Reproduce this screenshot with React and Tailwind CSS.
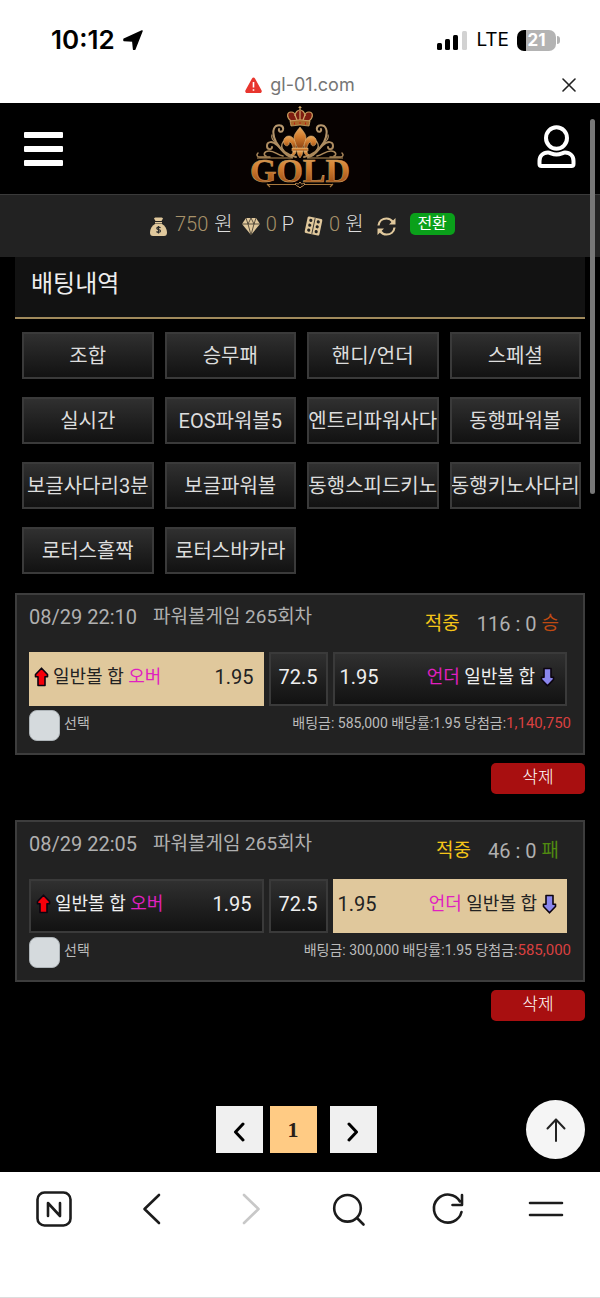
import React from "react";

const CATEGORIES = [
    "조합", "승무패", "핸디/언더", "스페셜",
    "실시간", "EOS파워볼5", "엔트리파워사다", "동행파워볼",
    "보글사다리3분", "보글파워볼", "동행스피드키노", "동행키노사다리",
    "로터스홀짝", "로터스바카라",
];

const BETS = [
    {
        id: 1, date: "08/29 22:10", game: "파워볼게임 265회차", score: "116 : 0",
        result: "승", picked: "over", stake: "585,000", payout: "1,140,750",
    },
    {
        id: 2, date: "08/29 22:05", game: "파워볼게임 265회차", score: "46 : 0",
        result: "패", picked: "under", stake: "300,000", payout: "585,000",
    },
];

const GRADIENT = "bg-linear-to-b from-[#303030] to-[#121212]";

const StatusBar = () => (
    <div className="flex h-[66px] items-center justify-between pt-[14px] pr-10 pl-[51px] font-['Inter',sans-serif] text-black">
        <div className="flex items-center gap-2">
            <span className="text-[26px] leading-8 font-semibold">10:12</span>
            <svg className="h-5 w-5" viewBox="0 0 20 20" fill="#000" stroke="#000" strokeWidth="1.500" strokeLinejoin="round">
                <path d="M19 1 1 9.300v1.200l8.800.600.800 8.200h1.200z" />
            </svg>
        </div>
        <div className="flex items-center gap-2">
            <svg className="h-[19px] w-[31px]" viewBox="0 0 31 19">
                <rect x="0" y="12" width="5" height="7" rx="1.500" />
                <rect x="8" y="8" width="5" height="11" rx="1.500" />
                <rect x="16" y="4" width="5" height="15" rx="1.500" />
                <rect x="25" y="0" width="5" height="19" rx="1.500" fill="#d2d2d2" />
            </svg>
            <span className="text-[19px] leading-6">LTE</span>
            <div className="flex items-center gap-px">
                <span className="flex h-[21px] w-[39px] items-center justify-center rounded-[7px] bg-linear-to-r from-black from-22% to-[#b3b3b3] to-22% text-[17px] leading-5 font-bold text-white">
                    21
                </span>
                <span className="h-2 w-[3px] rounded-r-full bg-[#b3b3b3]" />
            </div>
        </div>
    </div>
);

const AddressBar = () => (
    <div className="flex h-[37px] items-center pr-6 pl-[38px] font-['Inter',sans-serif]">
        <div className="flex flex-1 items-center justify-center gap-2">
            <svg className="h-4 w-[17px]" viewBox="0 0 17 16">
                <path d="M7 1.400 .5 13.200C-.2 14.600.6 16 2 16h13c1.400 0 2.200-1.400 1.500-2.800L10 1.400c-.7-1.300-2.300-1.300-3 0z" fill="#e8352e" />
                <path d="M8.500 5v5.500M8.500 12.300v1.500" stroke="#fff" strokeWidth="1.600" />
            </svg>
            <span className="text-[18px] leading-6 text-[#757575]">gl-01.com</span>
        </div>
        <button type="button" aria-label="닫기">
            <svg className="h-[14px] w-[14px]" viewBox="0 0 14 14" stroke="#222" strokeWidth="1.600" strokeLinecap="round">
                <path d="M1 1l12 12M13 1L1 13" />
            </svg>
        </button>
    </div>
);

const Scroll = () => (
    <g fill="none" stroke="url(#vine)" strokeLinecap="round">
        <path d="M66 57C56 55 50 49 46 42c-3-6-4-13 0-16 4-2 8 0 7 4-1 3-5 2-4-1" strokeWidth="2" />
        <path d="M62 57c-8-1-10-8-15-12-4-4-10-4-10 1 0 4 5 4 5 1" strokeWidth="2" />
        <path d="M53 56c-6-1-8-5-14-5-5 0-6 4-3 5" strokeWidth="1.600" />
        <path d="M40 57H30c-3 0-4-2-2-4" strokeWidth="1.500" />
        <path d="M54 51c-3-3-3-6-1-9 2-2 4 0 3 2M46 42c-3-1-5-4-4-7" strokeWidth="1.300" />
    </g>
);

const Logo = () => (
    <svg className="h-[90px] w-[140px]" viewBox="0 4 140 90" role="img" aria-label="GOLD">
        <defs>
            <linearGradient id="gold" x1="0" y1="0" x2="0" y2="1">
                <stop offset="0" stopColor="#e9a95c" />
                <stop offset=".45" stopColor="#d07a2c" />
                <stop offset="1" stopColor="#8a3f10" />
            </linearGradient>
            <linearGradient id="vine" gradientUnits="userSpaceOnUse" x1="0" y1="24" x2="0" y2="58">
                <stop offset="0" stopColor="#b99a70" />
                <stop offset="1" stopColor="#a98658" />
            </linearGradient>
        </defs>
        <path d="M0 4h140v90H0z" fill="#070201" />
        {/* crown */}
        <path d="M61 21c-5-4-4-9 0-9 3 0 4 2 4 4 0-4 3-6 5-6s5 2 5 6c0-2 1-4 4-4 4 0 5 5 0 9z" fill="#7d1d10" stroke="#c79c5e" strokeWidth="1.200" />
        <path d="M70 6v4M68.500 7.500h3M70 11v9M65 15l2 5M75 15l-2 5" stroke="#d0a869" strokeWidth="1.200" />
        <path d="M60 21q10-2.500 20 0l-1 5q-9-2-18 0z" fill="#a8672a" stroke="#d0a869" strokeWidth=".8" />
        <path d="M64 23.500h1M69.500 23h1M75 23.500h1" stroke="#b91d12" strokeWidth="2" />
        <Scroll />
        <g transform="translate(140 0) scale(-1 1)">
            <Scroll />
        </g>
        {/* fleur-de-lis */}
        <g fill="url(#gold)" stroke="#dfb678" strokeWidth=".6">
            <path d="M70 27c-3 4-6 7-6 11 0 5 3 7 3.500 11h5C73 45 76 43 76 38c0-4-3-7-6-11z" />
            <path d="M66 49c0-8-3-13-7-13-5 0-7 6-4 9 2 2 5 0 4-3 3 0 3 4 5 7z" />
            <path d="M74 49c0-8 3-13 7-13 5 0 7 6 4 9-2 2-5 0-4-3-3 0-3 4-5 7z" />
            <path d="M62 48h16v3H62z" />
            <path d="M67 51h6l-1 4-2 3-2-3zM66 51c0 3-2 5-5 4 1-1 2-2 2-4zM74 51c0 3 2 5 5 4-1-1-2-2-2-4z" />
        </g>
        <path d="M27 58h36M77 58h36" stroke="#b98f58" strokeWidth="1.200" />
        <text
            x="70" y="82" textAnchor="middle" fontFamily="'Liberation Serif', serif" fontWeight="700" fontSize="34"
            fill="url(#gold)" stroke="#c79a5f" strokeWidth=".6"
        >
            GOLD
        </text>
        <path d="M37 84.500h28M75 84.500h28M37 84l3 3M103 84l-3 3" stroke="#a8793f" strokeWidth="1.200" fill="none" />
        <path d="M65 84c2-2 3 2 5-2 2 4 3 0 5 2-2 3-4 2-5 4-1-2-3-1-5-4z" fill="none" stroke="#c9965a" strokeWidth="1" />
    </svg>
);

const Header = () => (
    <header className="flex h-[91px] items-center justify-between bg-black pr-6 pl-6">
        <button type="button" aria-label="메뉴" className="flex w-[39px] flex-col gap-2">
            <span className="h-[6px] rounded-[1px] bg-white" />
            <span className="h-[6px] rounded-[1px] bg-white" />
            <span className="h-[6px] rounded-[1px] bg-white" />
        </button>
        <Logo />
        <button type="button" aria-label="내 정보" className="pb-1">
            <svg className="h-[44px] w-[39px]" viewBox="0 0 39 44" fill="none" stroke="#fff" strokeWidth="4" strokeLinejoin="round">
                <ellipse cx="19.500" cy="13" rx="10.500" ry="10.800" />
                <path d="M11 27.500c-5 0-8.500 3.500-8.500 8.500v3c0 1.500.5 2 2 2h30c1.500 0 2-.5 2-2v-3c0-5-3.500-8.500-8.500-8.500-2.500 0-4 2-8.500 2s-6-2-8.500-2z" />
            </svg>
        </button>
    </header>
);

const Wallet = () => (
    <div className="flex h-[63px] items-center border-t border-[#3a3a3a] bg-[#222] pb-1 pl-[150px] text-[20px] leading-7 font-light text-[#ddd]">
        <svg className="mt-1 h-[19px] w-[17px]" viewBox="0 0 17 19" fill="#e0c89c">
            <path d="M4 1.500C5-.3 6.500.6 8.500.6s3.500-.9 4.500.9L11.500 4h-6zM5 5h7v1.500H5z" />
            <path d="M5 7h7c3 1.500 5 5 5 8.500 0 2.500-1 3.500-3 3.500H3c-2 0-3-1-3-3.500C0 12 2 8.500 5 7z" />
            <path d="M10.500 10.800c-1-1-3.700-.8-3.700.7 0 1.600 3.700.8 3.700 2.500 0 1.500-2.900 1.700-4 .5M8.500 9v7.500" fill="none" stroke="#2a2a2a" strokeWidth="1.200" />
        </svg>
        <span className="ml-2 text-[#a8926a]">750</span>
        <span className="ml-[6px]">원</span>
        <svg className="mt-1 ml-[9px] h-[17px] w-[18px]" viewBox="0 0 18 17">
            <path d="M4 0h10l4 6-9 11L0 6z" fill="#e0c89c" />
            <path d="M0 6h18M4 0l2 6 3 11 3-11 2-6M6 6l3-6 3 6" fill="none" stroke="#3a342a" strokeWidth=".8" />
        </svg>
        <span className="ml-[6px] text-[#a8926a]">0</span>
        <span className="ml-[5px]">P</span>
        <svg className="mt-1 ml-[10px] h-5 w-[19px]" viewBox="0 0 19 20">
            <g transform="rotate(12 9.500 10)">
                <rect x="2" y="1.500" width="15" height="17" rx="1.500" fill="#e0c89c" />
                <path d="M9.500 2v16" stroke="#222" strokeWidth=".8" />
                <g fill="#222">
                    <circle cx="5.700" cy="5" r="1.600" />
                    <circle cx="5.700" cy="10" r="1.600" />
                    <circle cx="5.700" cy="15" r="1.600" />
                    <circle cx="13.300" cy="5" r="1.600" />
                    <circle cx="13.300" cy="10" r="1.600" />
                    <circle cx="13.300" cy="15" r="1.600" />
                </g>
            </g>
        </svg>
        <span className="ml-[6px] text-[#a8926a]">0</span>
        <span className="ml-[5px]">원</span>
        <button type="button" aria-label="새로고침" className="mt-1 ml-[13px]">
            <svg className="h-[19px] w-[19px]" viewBox="0 0 19 19" fill="none" stroke="#e0c89c" strokeWidth="2.200">
                <path d="M1.500 8.500C2 4 5.500 1.500 9.500 1.500c3 0 5 1.500 6.500 3.500M17.500 10.500c-.5 4.500-4 7-8 7-3 0-5-1.500-6.500-3.500" />
                <path d="M18.500 1v6.500H12zM.5 18v-6.500H7z" fill="#e0c89c" stroke="none" />
            </svg>
        </button>
        <button type="button" className="ml-[14px] h-[22px] w-[45px] rounded-[5px] bg-[#0aa01a] text-[16px] leading-5 font-normal text-white">
            전환
        </button>
    </div>
);

const Arrow = ({ down }) => (
    <svg className={`h-5 w-[15px] shrink-0 ${down ? "rotate-180" : ""}`} viewBox="0 0 15 20">
        <path
            d="M7.500 1.200 13.500 7.500v2.300h-2.500V18.500H4V9.800H1.500V7.500z"
            fill={down ? "#8a86ee" : "#f5000a"} stroke="#0c0410" strokeWidth="1.600" strokeLinejoin="round"
        />
    </svg>
);

const oddsClass = (picked) =>
    picked ? "bg-[#e0c89c] text-[#222]" : `border-2 border-[#3a3a3a] text-[#eee] ${GRADIENT}`;

const BetCard = ({ bet }) => (
    <article className="mb-[26px]">
        <div className="border-2 border-[#3d3d3d] bg-[#222] px-3 pb-3">
            <div className="flex h-[57px] items-start justify-between pr-3 text-[20px] leading-7 text-[#b0b0b0]">
                <h2 className="flex pt-2">
                    {bet.date}
                    <span className="ml-4 text-[19px]">{bet.game}</span>
                </h2>
                <p className="flex pt-[15px]">
                    <span className="mr-[17px] text-[19px] text-[#f5c518]">적중</span>
                    {bet.score}
                    <span className={`ml-[5px] text-[19px] ${bet.result === "승" ? "text-[#c04a12]" : "text-[#4f8a10]"}`}>{bet.result}</span>
                </p>
            </div>
            <div className="grid h-[54px] grid-cols-[1fr_59px_1fr] gap-[5px] pr-1 text-[20px] leading-7">
                <button type="button" className={`flex items-center pr-[10px] pb-1 pl-[5px] ${oddsClass(bet.picked === "over")}`}>
                    <Arrow />
                    <span className="ml-1 text-[18px]">
                        일반볼 합 <span className="text-[#e020c0]">오버</span>
                    </span>
                    <span className="ml-auto">1.95</span>
                </button>
                <span className={`flex items-center justify-center border-2 border-[#3a3a3a] pb-1 text-[#eee] ${GRADIENT}`}>72.5</span>
                <button type="button" className={`flex items-center pr-[10px] pb-1 pl-[5px] ${oddsClass(bet.picked === "under")}`}>
                    <span>1.95</span>
                    <span className="mr-[5px] ml-auto text-[18px]">
                        <span className="text-[#e020c0]">언더</span> 일반볼 합
                    </span>
                    <Arrow down />
                </button>
            </div>
            <div className="mt-1 flex items-start justify-between text-[14px] leading-[26px] text-[#bbb]">
                <label className="flex gap-1">
                    <input type="checkbox" className="h-[31px] w-[31px] appearance-none rounded-[8px] border border-[#aeb4b8] bg-[#d5dadd] checked:bg-[#e0c89c]" />
                    선택
                </label>
                <p>
                    배팅금: {bet.stake} 배당률:1.95 당첨금:<span className="text-[15px] text-[#d94040]">{bet.payout}</span>
                </p>
            </div>
        </div>
        <button type="button" className="mt-2 ml-auto block h-[31px] w-[94px] rounded-[5px] bg-[#a80f10] pb-1 text-[17px] leading-6 font-light text-white">
            삭제
        </button>
    </article>
);

const Pagination = () => (
    <nav className="mt-[79px] flex items-center justify-between pb-[13px]">
        <span className="w-[51px]" />
        <div className="flex">
            <button type="button" aria-label="이전" className="flex h-[47px] w-[47px] items-center justify-center bg-[#f0f0f0] pt-1">
                <svg className="h-5 w-3" viewBox="0 0 12 20" fill="none" stroke="#000" strokeWidth="3" strokeLinecap="round" strokeLinejoin="round">
                    <path d="M10 2 2.500 10l7.500 8" />
                </svg>
            </button>
            <button type="button" className="ml-[7px] h-[47px] w-[47px] bg-[#ffcb84] font-['Liberation_Serif',serif] text-[22px] font-bold text-[#2a2018]">1</button>
            <button type="button" aria-label="다음" className="ml-[13px] flex h-[47px] w-[47px] items-center justify-center bg-[#f0f0f0] pt-1">
                <svg className="h-5 w-3" viewBox="0 0 12 20" fill="none" stroke="#000" strokeWidth="3" strokeLinecap="round" strokeLinejoin="round">
                    <path d="M2 2l7.500 8L2 18" />
                </svg>
            </button>
        </div>
        <button type="button" aria-label="맨 위로" className="flex h-[59px] w-[59px] items-center justify-center rounded-full bg-[#f5f5f5]">
            <svg className="h-6 w-5" viewBox="0 0 20 24" fill="none" stroke="#222" strokeWidth="2" strokeLinecap="round" strokeLinejoin="round">
                <path d="M10 23V1.500M1.500 10.500 10 1.500l8.500 9" />
            </svg>
        </button>
    </nav>
);

const TOOLS = [
    { label: "홈", path: "M12 25V12l12 13V12" },
    { label: "뒤로", path: "M25 4 10.500 18 25 32" },
    { label: "앞으로", path: "M11 4l14.500 14L11 32", muted: true },
    { label: "검색", path: "M16.500 4a13.300 13.300 0 1 0 0 26.600 13.300 13.300 0 1 0 0-26.600M26 27l6.500 6.500" },
    { label: "새로고침", path: "M31.500 21A14 14 0 1 1 30 10.500M32 4v10H22.500" },
    { label: "더보기", path: "M2 12h32M2 24h32" },
];

const Toolbar = () => (
    <footer className="flex h-[126px] items-start justify-between border-b border-[#ddd] bg-white px-9 pt-[19px]">
        {TOOLS.map((tool) => (
            <button key={tool.label} type="button" aria-label={tool.label}>
                <svg
                    className="h-9 w-9" viewBox="0 0 36 36" fill="none" stroke={tool.muted ? "#c8c8c8" : "#1c1c1c"}
                    strokeWidth="2.600" strokeLinecap="round" strokeLinejoin="round"
                >
                    {tool.label === "홈" && <rect x="1.500" y="1.500" width="33" height="33" rx="7" />}
                    <path d={tool.path} />
                </svg>
            </button>
        ))}
    </footer>
);

const App = () => (
    <div className="bg-white font-['Roboto','Noto_Sans_CJK_KR',sans-serif]">
        <StatusBar />
        <AddressBar />
        <div className="relative bg-black">
            <Header />
            <Wallet />
            <main className="px-[15px]">
                <h1 className="border-b-2 border-[#a08a5c] bg-[#121212] pt-[11px] pb-[17px] pl-4 text-[24px] leading-8 text-[#eee]">
                    배팅내역
                </h1>
                <div className="mt-[13px] mb-[19px] grid grid-cols-4 gap-x-[11px] gap-y-[18px] pr-1 pl-[7px]">
                    {CATEGORIES.map((name) => (
                        <button
                            key={name}
                            type="button"
                            className={`flex h-[47px] items-center justify-center overflow-hidden border-2 border-[#3a3a3a] text-[20px] leading-7 whitespace-nowrap text-[#ddd] ${GRADIENT}`}
                        >
                            {name}
                        </button>
                    ))}
                </div>
                {BETS.map((bet) => (
                    <BetCard key={bet.id} bet={bet} />
                ))}
                <Pagination />
            </main>
            {/* scroll thumb */}
            <div className="absolute top-4 right-[5px] h-[375px] w-[5px] rounded-full bg-[#777]" />
        </div>
        <Toolbar />
    </div>
);

export default App;
